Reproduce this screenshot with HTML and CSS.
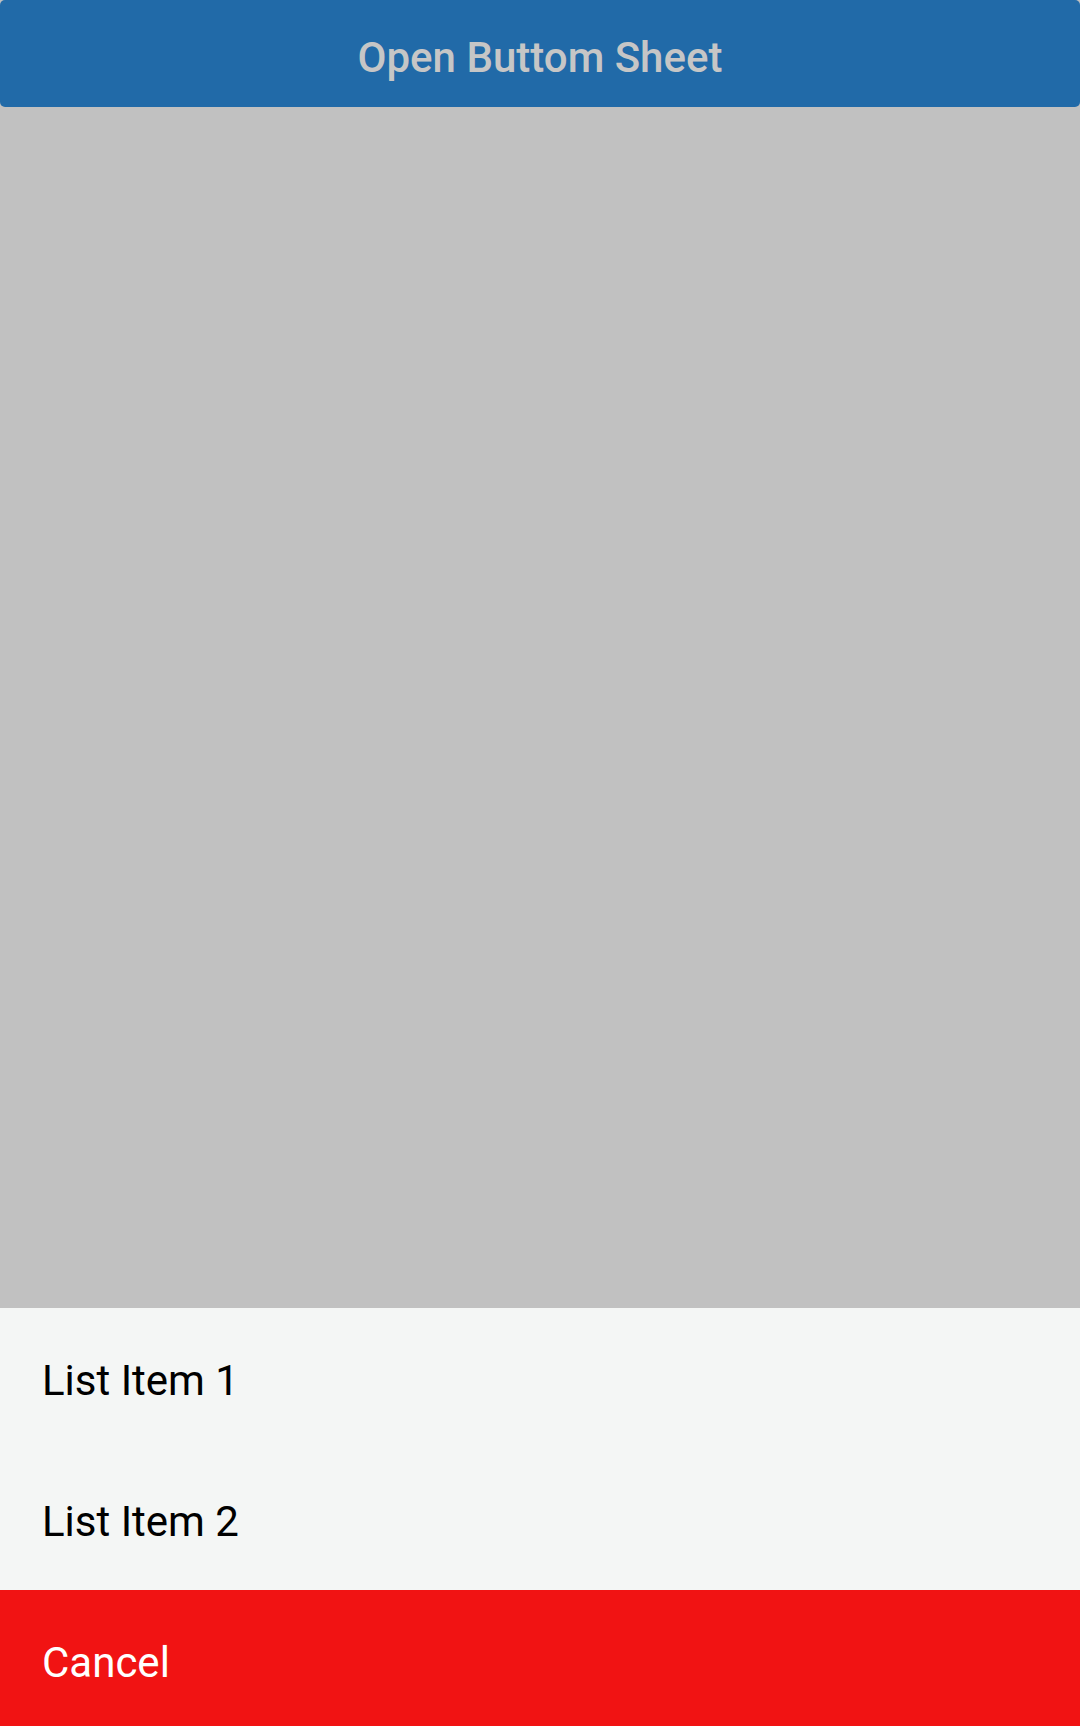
FILE: index.html
```html
<!DOCTYPE html>
<html>
<head>
<meta charset="utf-8">
<link rel="stylesheet" href="styles.css">
</head>
<body>
<div class="screen">
  <div class="open-btn">Open Buttom Sheet</div>
  <div class="backdrop"></div>
  <div class="sheet">
    <div class="item">List Item 1</div>
    <div class="item">List Item 2</div>
    <div class="item cancel">Cancel</div>
  </div>
</div>
</body>
</html>
```

FILE: styles.css
```css
html, body {
  margin: 0;
  padding: 0;
}
body {
  font-family: Roboto, "Liberation Sans", sans-serif;
  background: #c1c1c1;
}
.screen {
  width: 1080px;
  height: 1726px;
  display: flex;
  flex-direction: column;
  overflow: hidden;
}
.open-btn {
  height: 107px;
  box-sizing: border-box;
  padding-top: 8px;
  line-height: 99px;
  background: #216aa8;
  border-radius: 5px;
  color: #c6c6c6;
  font-size: 42px;
  font-weight: 500;
  text-align: center;
}
.backdrop {
  flex: 1;
  background: #c1c1c1;
}
.sheet {
  display: flex;
  flex-direction: column;
  background: #f4f6f5;
}
.item {
  height: 141px;
  box-sizing: border-box;
  padding: 47px 0 0 42px;
  font-size: 42px;
  line-height: 52px;
  color: #000;
}
.cancel {
  height: 136px;
  background: #f11313;
  color: #fff;
}
```
